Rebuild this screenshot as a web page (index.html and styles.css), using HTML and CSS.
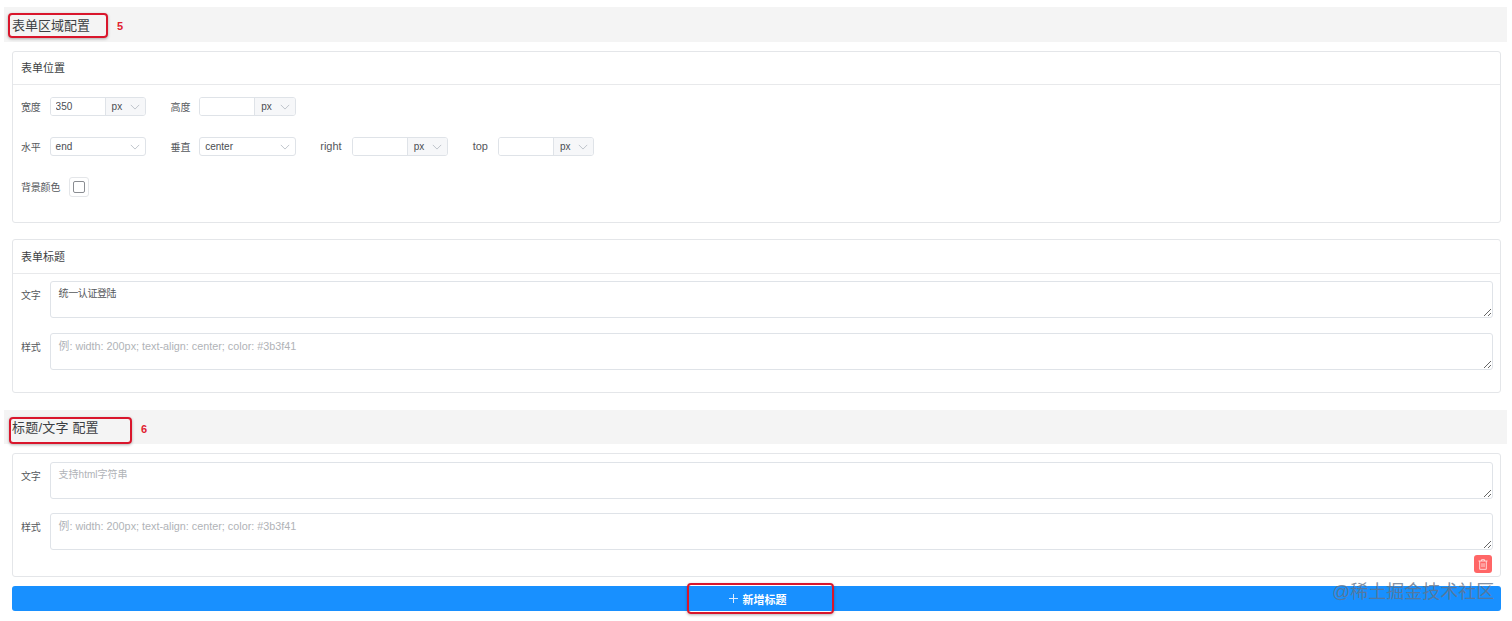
FILE: index.html
```html
<!DOCTYPE html>
<html lang="zh">
<head>
<meta charset="utf-8">
<title>表单区域配置</title>
<link rel="stylesheet" href="styles.css">
</head>
<body>
<svg class="defs" width="0" height="0"><symbol id="chev" viewBox="0 0 12 7"><path d="M1 1l5 5 5-5" fill="none" stroke="#b4bac2" stroke-width="1"/></symbol></svg>

<section class="head head-first"><h2 class="head-title">表单区域配置</h2></section>
<div class="card card-pos">
  <div class="card-head">表单位置</div>
  <div class="pos-body">
    <div class="row">
      <div class="item"><span class="lbl">宽度</span>
        <div class="group"><input class="num" value="350"><div class="unit">px<svg class="chev"><use href="#chev"/></svg></div></div></div>
      <div class="item"><span class="lbl">高度</span>
        <div class="group"><input class="num"><div class="unit">px<svg class="chev"><use href="#chev"/></svg></div></div></div>
    </div>
    <div class="row">
      <div class="item"><span class="lbl">水平</span>
        <div class="select">end<svg class="chev"><use href="#chev"/></svg></div></div>
      <div class="item"><span class="lbl">垂直</span>
        <div class="select">center<svg class="chev"><use href="#chev"/></svg></div></div>
      <div class="item"><span class="lbl lbl-en">right</span>
        <div class="group"><input class="num"><div class="unit">px<svg class="chev"><use href="#chev"/></svg></div></div></div>
      <div class="item"><span class="lbl lbl-en">top</span>
        <div class="group"><input class="num"><div class="unit">px<svg class="chev"><use href="#chev"/></svg></div></div></div>
    </div>
    <div class="row">
      <div class="item"><span class="lbl">背景颜色</span><div class="swatch"><span class="swatch-in"></span></div></div>
    </div>
  </div>
</div>

<div class="card card-title">
  <div class="card-head card-head-tall">表单标题</div>
  <div class="text-body">
    <div class="field"><span class="lbl">文字</span><textarea class="area area-value">统一认证登陆</textarea></div>
    <div class="field"><span class="lbl">样式</span><textarea class="area area-style" placeholder="例: width: 200px; text-align: center; color: #3b3f41"></textarea></div>
  </div>
</div>

<section class="head head-second"><h2 class="head-title">标题/文字 配置</h2></section>
<div class="card card-text">
  <div class="field"><span class="lbl">文字</span><textarea class="area" placeholder="支持html字符串"></textarea></div>
  <div class="field"><span class="lbl">样式</span><textarea class="area area-style" placeholder="例: width: 200px; text-align: center; color: #3b3f41"></textarea></div>
  <div class="del-row"><button class="del" aria-label="删除"><svg width="10" height="11" viewBox="0 0 10 11"><path d="M.5 2h9M3.5 2V.7h3V2M1.7 2v8.3h6.6V2M4 4.2v4M6 4.2v4" fill="none" stroke="#ffd9d9" stroke-width="1"/></svg></button></div>
</div>
<button class="add"><svg class="plus" width="9" height="9" viewBox="0 0 9 9"><path d="M4.5 0v9M0 4.5h9" stroke="#dcecff" stroke-width="1"/></svg>新增标题</button>

<div class="mark mark-1"></div><span class="num-note note-1">5</span>
<div class="mark mark-2"></div><span class="num-note note-2">6</span>
<div class="mark mark-3"></div>
<div class="watermark">@稀土掘金技术社区</div>
</body>
</html>
```
FILE: styles.css
```css
* { box-sizing: border-box; }
html, body { margin: 0; padding: 0; }
body {
  position: relative;
  width: 1512px;
  height: 621px;
  overflow: hidden;
  background: #fff;
  color: #4a4d52;
  font-family: "Liberation Sans", "Noto Sans CJK SC", sans-serif;
  font-size: 10px;
  padding-top: 7px;
}
.defs { position: absolute; }
.head {
  height: 35px;
  margin: 0 5px 0 4px;
  padding-left: 8px;
  background: #f4f4f4;
  display: flex;
  align-items: center;
}
.head-second { margin-top: 17px; height: 34px; }
.head-title {
  margin: 0;
  font-size: 13px;
  font-weight: 400;
  color: #3d3f43;
}
.head-second .head-title { position: relative; top: -1px; letter-spacing: .2px; }
.card {
  margin: 9px 11px 0 12px;
  border: 1px solid #e4e6e9;
  border-radius: 3px;
  background: #fff;
}
.card-pos { height: 172px; }
.card-title { height: 154px; margin-top: 16px; }
.card-text { height: 124px; padding: 8px 7px 0 8px; }
.card-head {
  height: 33px;
  padding: 0 0 2px 8px;
  display: flex;
  align-items: center;
  font-size: 11px;
  color: #3d3f43;
  border-bottom: 1px solid #e8e9eb;
}
.card-head-tall { height: 34px; }
.pos-body { padding: 12px 8px 0; display: flex; flex-direction: column; gap: 21px; }
.row { display: flex; gap: 24.5px; height: 19px; align-items: center; }
.item { display: flex; align-items: center; gap: 9px; }
.lbl { font-size: 10px; letter-spacing: -.2px; color: #55585c; white-space: nowrap; position: relative; top: -.5px; }
.lbl-en { font-size: 11px; letter-spacing: 0; margin-right: 1px; }
.group { display: flex; width: 96.5px; height: 19px; border: 1px solid #dfe3e8; border-radius: 3px; background: #fff; overflow: hidden; }
.num { width: 55px; height: 100%; padding: 0 5px; border: 0; border-right: 1px solid #dfe3e8; outline: 0; font: inherit; color: #4a4d52; background: #fff; }
.unit { flex: 1; display: flex; align-items: center; justify-content: space-between; padding: 0 5px 0 6px; background: #f6f7f9; }
.select { width: 96.5px; height: 19px; border: 1px solid #dfe3e8; border-radius: 3px; display: flex; align-items: center; justify-content: space-between; padding: 0 5px; }
.chev { width: 10px; height: 6px; }
.swatch { width: 20px; height: 20px; border: 1px solid #e4e6e9; border-radius: 3px; display: flex; align-items: center; justify-content: center; }
.swatch-in { width: 12px; height: 12px; border: 1px solid #8a8d92; border-radius: 2px; }
.text-body { padding: 7px 0 0 8px; margin-right: 7px; }
.field { display: flex; gap: 9px; }
.text-body .field + .field { margin-top: 15px; }
.card-text .field + .field { margin-top: 14px; }
.field .lbl { padding-top: 6px; }
.area {
  flex: 1;
  height: 37px;
  min-width: 0;
  padding: 3px 8px;
  border: 1px solid #dfe3e8;
  border-radius: 3px;
  outline: 0;
  font: inherit;
  color: #55585c;
  display: block;
  margin: 0;
}
.area::placeholder { color: #b0b3b7; opacity: 1; }
.area-value { letter-spacing: -.4px; }
.area-style { font-size: 10.8px; }
.del-row { display: flex; justify-content: flex-end; margin: 5px 1px 0 0; }
.del { width: 18px; height: 18px; padding: 0; border: 0; border-radius: 3px; background: #ff6666; display: flex; align-items: center; justify-content: center; }
.add {
  display: flex;
  align-items: center;
  justify-content: center;
  gap: 5px;
  width: 1489px;
  height: 25px;
  margin: 9px 0 0 12px;
  border: 0;
  border-radius: 3px;
  background: #1890ff;
  color: #fff;
  font: inherit;
  font-size: 11px;
  font-weight: 700;
  padding: 0 0 0 2px;
}
.mark {
  position: absolute;
  border: 2px solid #d9162c;
  border-radius: 4px;
  box-shadow: 0 1px 3px rgba(0,0,0,.3);
}
.mark-1 { left: 8px; top: 13px; width: 100px; height: 25px; }
.mark-2 { left: 9px; top: 417px; width: 123px; height: 27px; }
.mark-3 { left: 687px; top: 583px; width: 147px; height: 31px; }
.num-note { position: absolute; color: #e0202f; font-size: 11px; font-weight: 700; }
.note-1 { left: 117px; top: 20px; }
.note-2 { left: 141px; top: 423px; }
.watermark {
  position: absolute;
  left: 1332px;
  top: 582px;
  font-size: 18px;
  line-height: 21px;
  color: rgba(100,115,135,.8);
  white-space: nowrap;
}
```
